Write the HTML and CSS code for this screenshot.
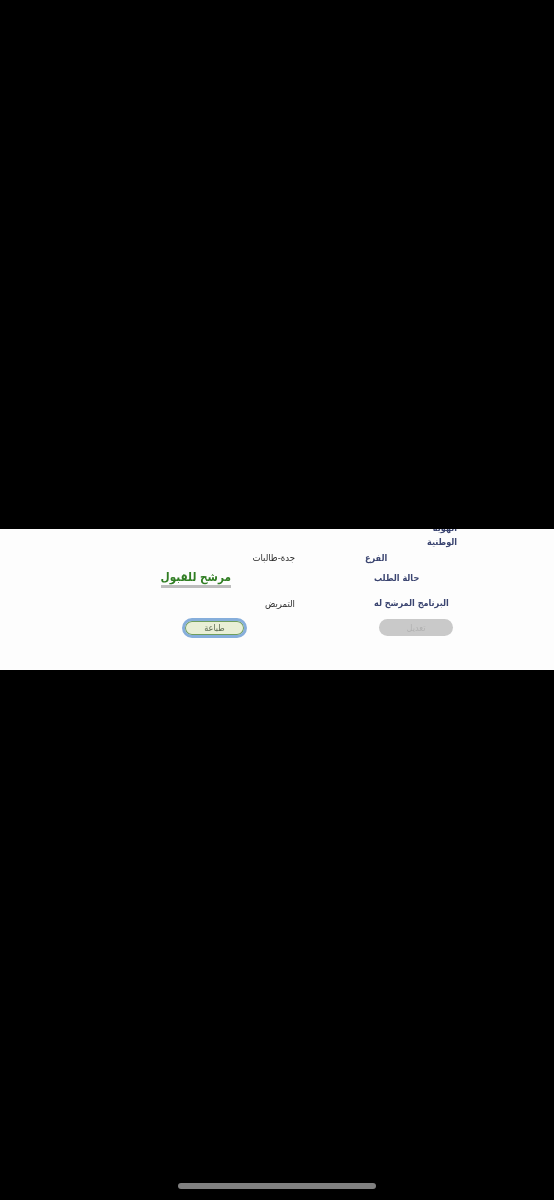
FILE: index.html
```html
<!DOCTYPE html>
<html lang="ar">
<head>
    <meta charset="UTF-8">
    <meta name="viewport" content="width=device-width, initial-scale=1.0">
    <title>حالة الطلب</title>
    <link rel="stylesheet" href="styles.css">
</head>
<body>
    <div class="screen">
        <div class="sheet">
            <div class="details">
                <div class="row row-id">
                    <div class="value"></div>
                    <div class="label">الهوية<br>الوطنية</div>
                </div>
                <div class="row row-branch">
                    <div class="value">جدة-طالبات</div>
                    <div class="label">الفرع</div>
                </div>
                <div class="row row-status">
                    <div class="value status">مرشح للقبول</div>
                    <div class="label">حالة الطلب</div>
                </div>
                <div class="row row-program">
                    <div class="value">التمريض</div>
                    <div class="label">البرنامج المرشح له</div>
                </div>
                <div class="row row-actions">
                    <div class="value">
                        <button type="button" class="print-button">طباعة</button>
                    </div>
                    <div class="label">
                        <button type="button" class="edit-button" disabled>تعديل</button>
                    </div>
                </div>
            </div>
        </div>
        <div class="home-indicator"></div>
    </div>
</body>
</html>
```

FILE: styles.css
```css
html, body {
    margin: 0;
    padding: 0;
    background: #000;
}

.screen {
    position: relative;
    width: 554px;
    height: 1200px;
    padding-top: 529px;
    box-sizing: border-box;
    background: #000;
    overflow: hidden;
}

.sheet {
    height: 141px;
    background: #fdfdfd;
    overflow: hidden;
    font-family: "DejaVu Sans Condensed", "DejaVu Sans", sans-serif;
}

.details {
    margin-top: -9px;
    filter: blur(0.35px);
}

.row {
    display: grid;
    grid-template-columns: 295px 1fr;
    align-items: center;
}

.row-id { height: 29px; }
.row-branch { height: 17px; }
.row-status { height: 24px; }
.row-program { height: 26px; }
.row-actions { height: 23px; }

.value {
    text-align: right;
    font-size: 9.5px;
    color: #2b2b2b;
}

.label {
    direction: rtl;
    text-align: right;
    justify-self: start;
    font-size: 9px;
    font-weight: bold;
    line-height: 14px;
    color: #3a4470;
}

.row-id .label { margin-left: 132px; }
.row-branch .label { margin-left: 70px; }
.row-status .label { margin-left: 79px; }
.row-program .label { margin-left: 79px; }
.row-actions .label { margin-left: 84px; }

.value.status {
    justify-self: end;
    margin-top: 2px;
    margin-right: 64px;
    border-bottom: 3px solid #bdbdbd;
    font-size: 11.7px;
    font-weight: bold;
    line-height: 15px;
    color: #2f7d22;
}

.print-button {
    display: block;
    width: 65px;
    height: 20px;
    margin-left: 182px;
    padding: 0;
    box-sizing: border-box;
    background: #e9efd6;
    border: 3px solid #86aedb;
    border-radius: 10px;
    box-shadow: inset 0 0 0 1px #6f9e5c;
    font-family: "DejaVu Sans Condensed", "DejaVu Sans", sans-serif;
    font-size: 9px;
    color: #5c6b50;
}

.edit-button {
    display: block;
    width: 74px;
    height: 17px;
    padding: 0;
    background: #c9c9c9;
    border: none;
    border-radius: 9px;
    font-family: "DejaVu Sans Condensed", "DejaVu Sans", sans-serif;
    font-size: 9px;
    color: #b2b2b2;
}

.home-indicator {
    position: absolute;
    left: 178px;
    bottom: 11px;
    width: 198px;
    height: 6px;
    border-radius: 3px;
    background: #808080;
}
```
